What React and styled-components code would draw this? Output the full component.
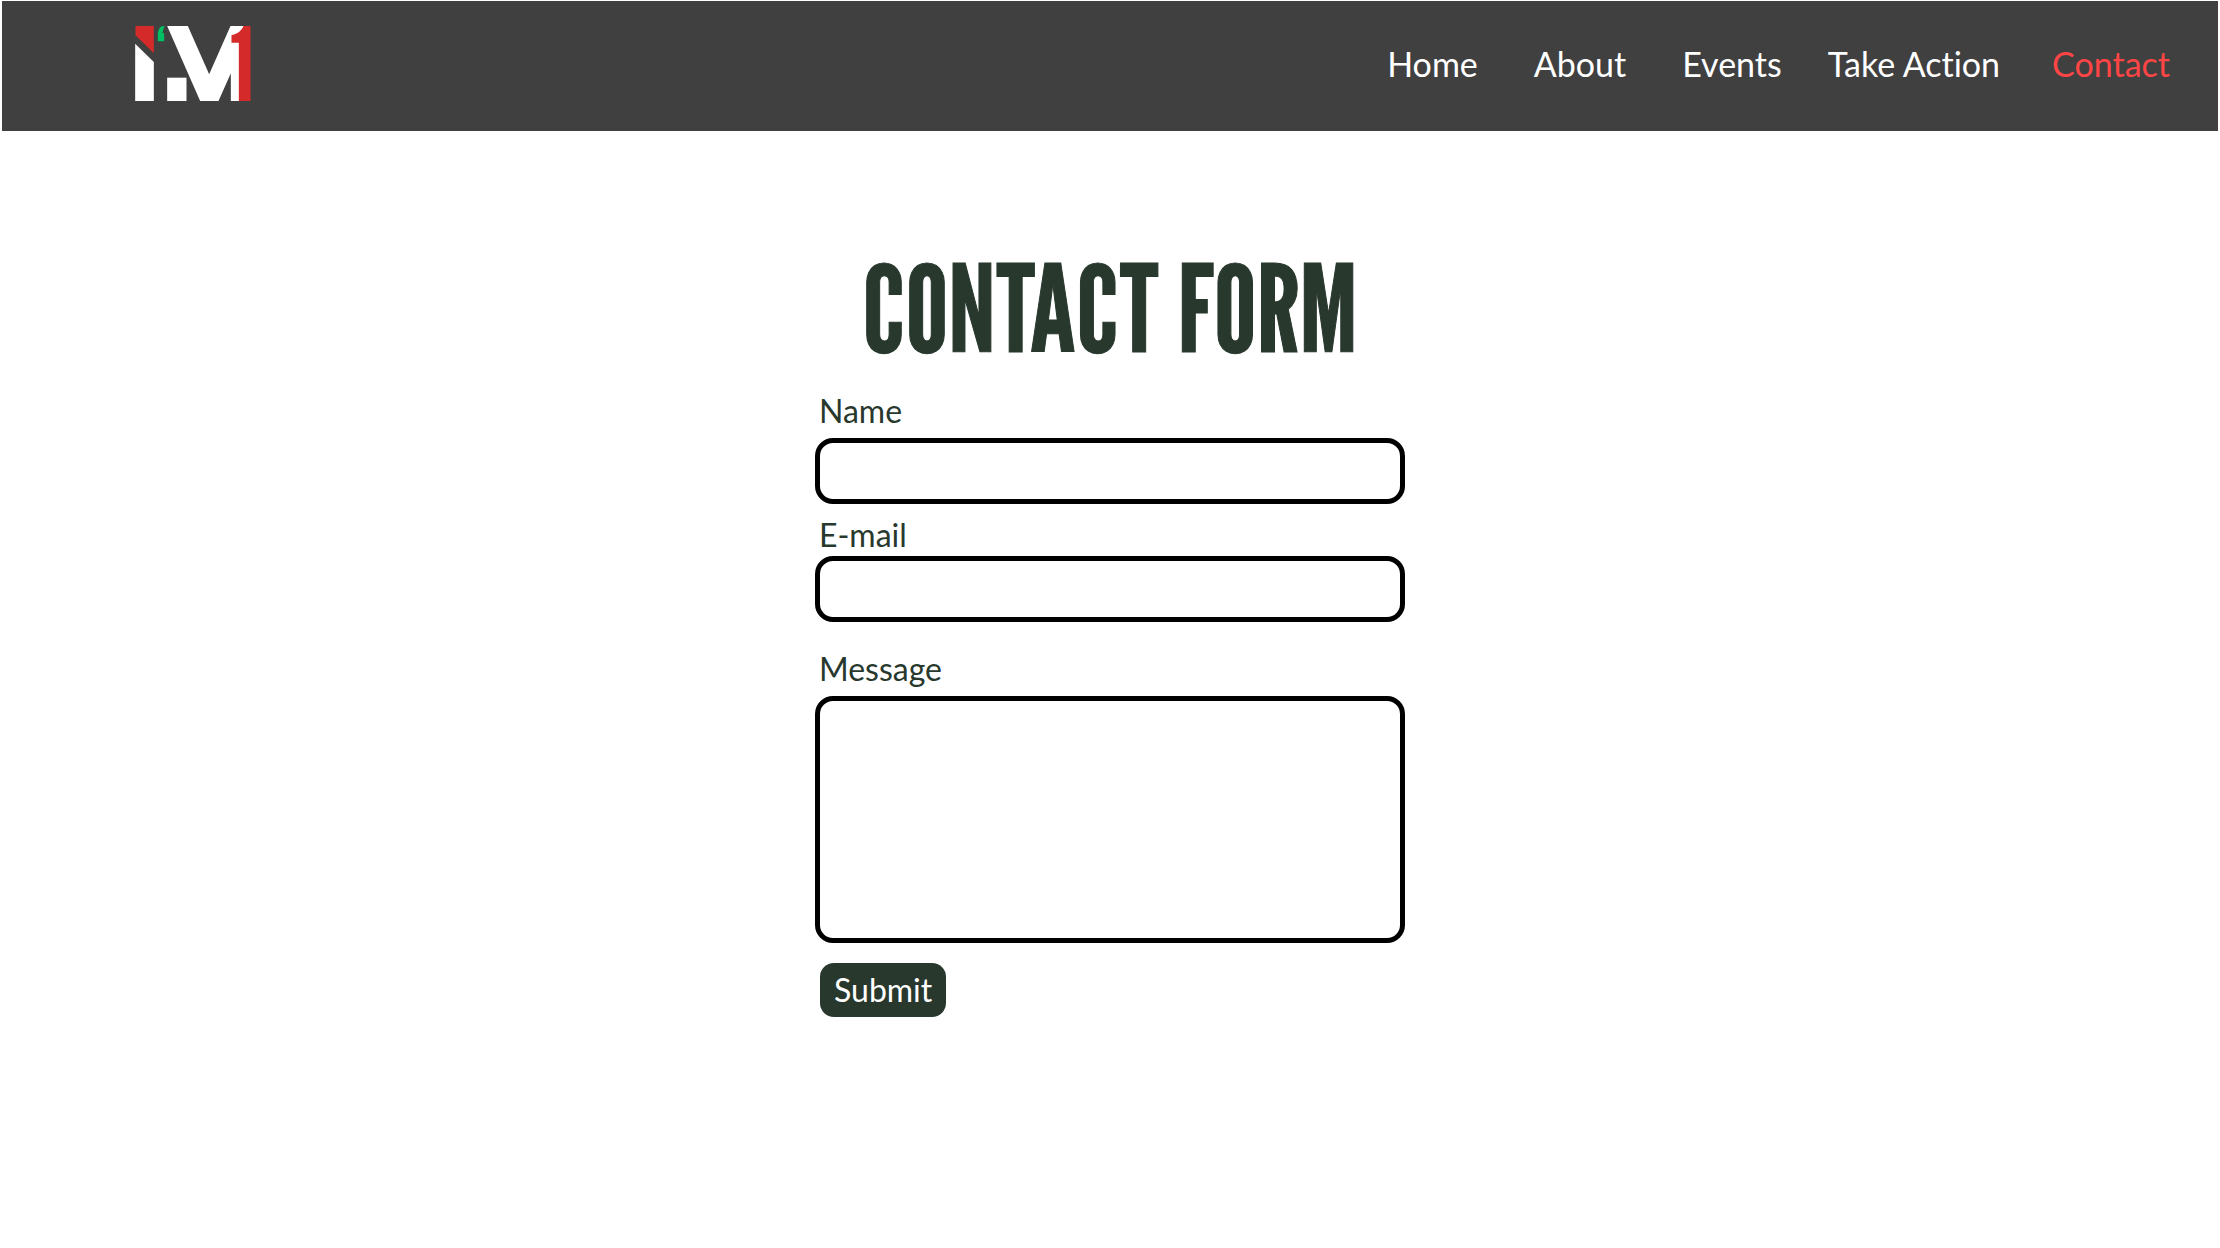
import React from "react";
import styled, { createGlobalStyle } from "styled-components";

const ink = "#28382d";

const GlobalStyle = createGlobalStyle`
  *, *::before, *::after { box-sizing: border-box; }
  body {
    margin: 0;
    background: #ffffff;
    color: ${ink};
    font-family: Lato, "Open Sans", sans-serif;
    font-variant-ligatures: none;
  }
`;

const Header = styled.header`
  display: flex;
  align-items: center;
  justify-content: space-between;
  margin: 1px 2px 0;
  height: 130px;
  padding: 0 48px 5px 133px;
  background: #404040;
`;

const LogoLink = styled.a`
  display: block;
  line-height: 0;
`;

const Nav = styled.nav`
  display: flex;
`;

const NavLink = styled.a`
  margin-left: ${({ $gap }) => $gap}px;
  color: ${({ $active }) => ($active ? "#ff4545" : "#ffffff")};
  font-size: 34px;
  line-height: 40px;
  text-decoration: none;
`;

const Main = styled.main`
  display: flex;
  flex-direction: column;
  align-items: center;
  padding: 117px 16px 48px;
`;

const Title = styled.h1`
  margin: 0;
  font-family: "League Gothic", "Liberation Sans Narrow", "DejaVu Sans Condensed", sans-serif;
  font-size: 120px;
  font-weight: 400;
  line-height: 120px;
  text-transform: uppercase;
  -webkit-text-stroke: 1px ${ink};
`;

const Form = styled.form`
  display: flex;
  flex-direction: column;
  width: 100%;
  max-width: 590px;
  padding-top: 22px;
`;

const Field = styled.div`
  display: flex;
  flex-direction: column;
  gap: ${({ $gap }) => $gap}px;
  margin-bottom: ${({ $after }) => $after}px;
`;

const Label = styled.label`
  padding-left: 4px;
  font-size: 32px;
  line-height: 42px;
`;

const Input = styled.input`
  width: 100%;
  height: 66px;
  padding: 0 16px;
  border: 5px solid #000000;
  border-radius: 18px;
  background: #ffffff;
  color: ${ink};
  font: inherit;
  font-size: 28px;
`;

const TextArea = styled(Input)`
  display: block;
  height: 247px;
  padding: 12px 16px;
  resize: none;
`;

const Submit = styled.button`
  align-self: flex-start;
  height: 54px;
  margin-left: 5px;
  padding: 0 14px;
  border: 0;
  border-radius: 14px;
  background: ${ink};
  color: #ffffff;
  font: inherit;
  font-size: 32px;
  line-height: 42px;
`;

const links = [
  { label: "Home", gap: 0 },
  { label: "About", gap: 56 },
  { label: "Events", gap: 56 },
  { label: "Take Action", gap: 46 },
  { label: "Contact", gap: 52, active: true },
];

function Logo() {
  return (
    <svg width="116" height="75" viewBox="46 47 347 225" role="img" aria-label="I'M1">
      <path fill="#d42a2a" d="M47 47H102V129L47 75Z" />
      <path fill="#ffffff" d="M46 100L102 155V272H46Z" />
      <path fill="#00bf63" d="M125 48H135Q129 57 128 68H133V93H114V70Q115 55 125 48Z" />
      <path fill="#ffffff" d="M142 47H204L268 192L332 47H372L358 96V272H333V189L296 272H241Z" />
      <path fill="#ffffff" d="M142 202H200V272H142Z" />
      <path fill="#d42a2a" d="M371 47H392V272H357V97H335V74C351 72 364 63 371 47Z" />
    </svg>
  );
}

export default function App() {
  return (
    <>
      <GlobalStyle />
      <Header>
        <LogoLink href="#home">
          <Logo />
        </LogoLink>
        <Nav aria-label="Main">
          {links.map(({ label, gap, active }) => (
            <NavLink
              key={label}
              href={"#" + label.toLowerCase().replace(" ", "-")}
              $gap={gap}
              $active={active}
              aria-current={active ? "page" : undefined}
            >
              {label}
            </NavLink>
          ))}
        </Nav>
      </Header>
      <Main>
        <Title>Contact Form</Title>
        <Form onSubmit={(event) => event.preventDefault()}>
          <Field $gap={6} $after={10}>
            <Label htmlFor="name">Name</Label>
            <Input id="name" name="name" type="text" />
          </Field>
          <Field $gap={0} $after={26}>
            <Label htmlFor="email">E-mail</Label>
            <Input id="email" name="email" type="email" />
          </Field>
          <Field $gap={6} $after={20}>
            <Label htmlFor="message">Message</Label>
            <TextArea as="textarea" id="message" name="message" />
          </Field>
          <Submit type="submit">Submit</Submit>
        </Form>
      </Main>
    </>
  );
}
